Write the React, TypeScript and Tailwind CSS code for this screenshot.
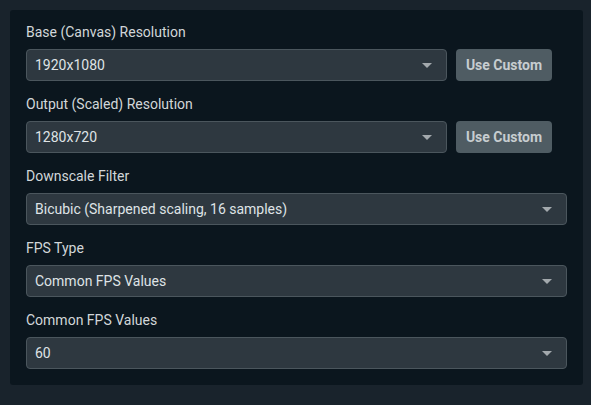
import React from 'react';

type Field = { label: string; value: string; custom?: boolean };

const fields: Field[] = [
  { label: 'Base (Canvas) Resolution', value: '1920x1080', custom: true },
  { label: 'Output (Scaled) Resolution', value: '1280x720', custom: true },
  { label: 'Downscale Filter', value: 'Bicubic (Sharpened scaling, 16 samples)' },
  { label: 'FPS Type', value: 'Common FPS Values' },
  { label: 'Common FPS Values', value: '60' },
];

const Caret: React.FC = () => (
  <svg width="10" height="5" viewBox="0 0 10 5" className="shrink-0">
    <path d="M0 0 L10 0 L5 5 Z" fill="#a3a9ad" />
  </svg>
);

const SelectBox: React.FC<{ value: string }> = ({ value }) => (
  <div className="flex-1 h-8 flex items-center justify-between pl-[8px] pr-[14px] rounded-[4px] bg-[#2e3840] border border-[#4b565d] text-[14px] text-[#dfe3e6]">
    <span>{value}</span>
    <Caret />
  </div>
);

const App: React.FC = () => {
  return (
    <div
      className="w-[591px] h-[405px] bg-[#19232c] p-[10px] pr-[8px]"
      style={{ fontFamily: 'Roboto, "Liberation Sans", sans-serif' }}
    >
      <div className="bg-[#0b161e] rounded-[3px] pt-[14px] pb-[16px] pl-[16px] pr-[16px] flex flex-col gap-[15px]">
        {fields.map((f) => (
          <div key={f.label}>
            <div className="h-4 leading-4 text-[14px] text-[#d2d6d9] mb-[9px]">{f.label}</div>
            <div className={f.custom ? 'flex gap-[9px] mr-[15px]' : 'flex'}>
              <SelectBox value={f.value} />
              {f.custom && (
                <button className="w-[96px] h-8 rounded-[4px] bg-[#4f5c63] text-[14px] font-bold text-[#c7cdd0]">
                  Use Custom
                </button>
              )}
            </div>
          </div>
        ))}
      </div>
    </div>
  );
};

export default App;
